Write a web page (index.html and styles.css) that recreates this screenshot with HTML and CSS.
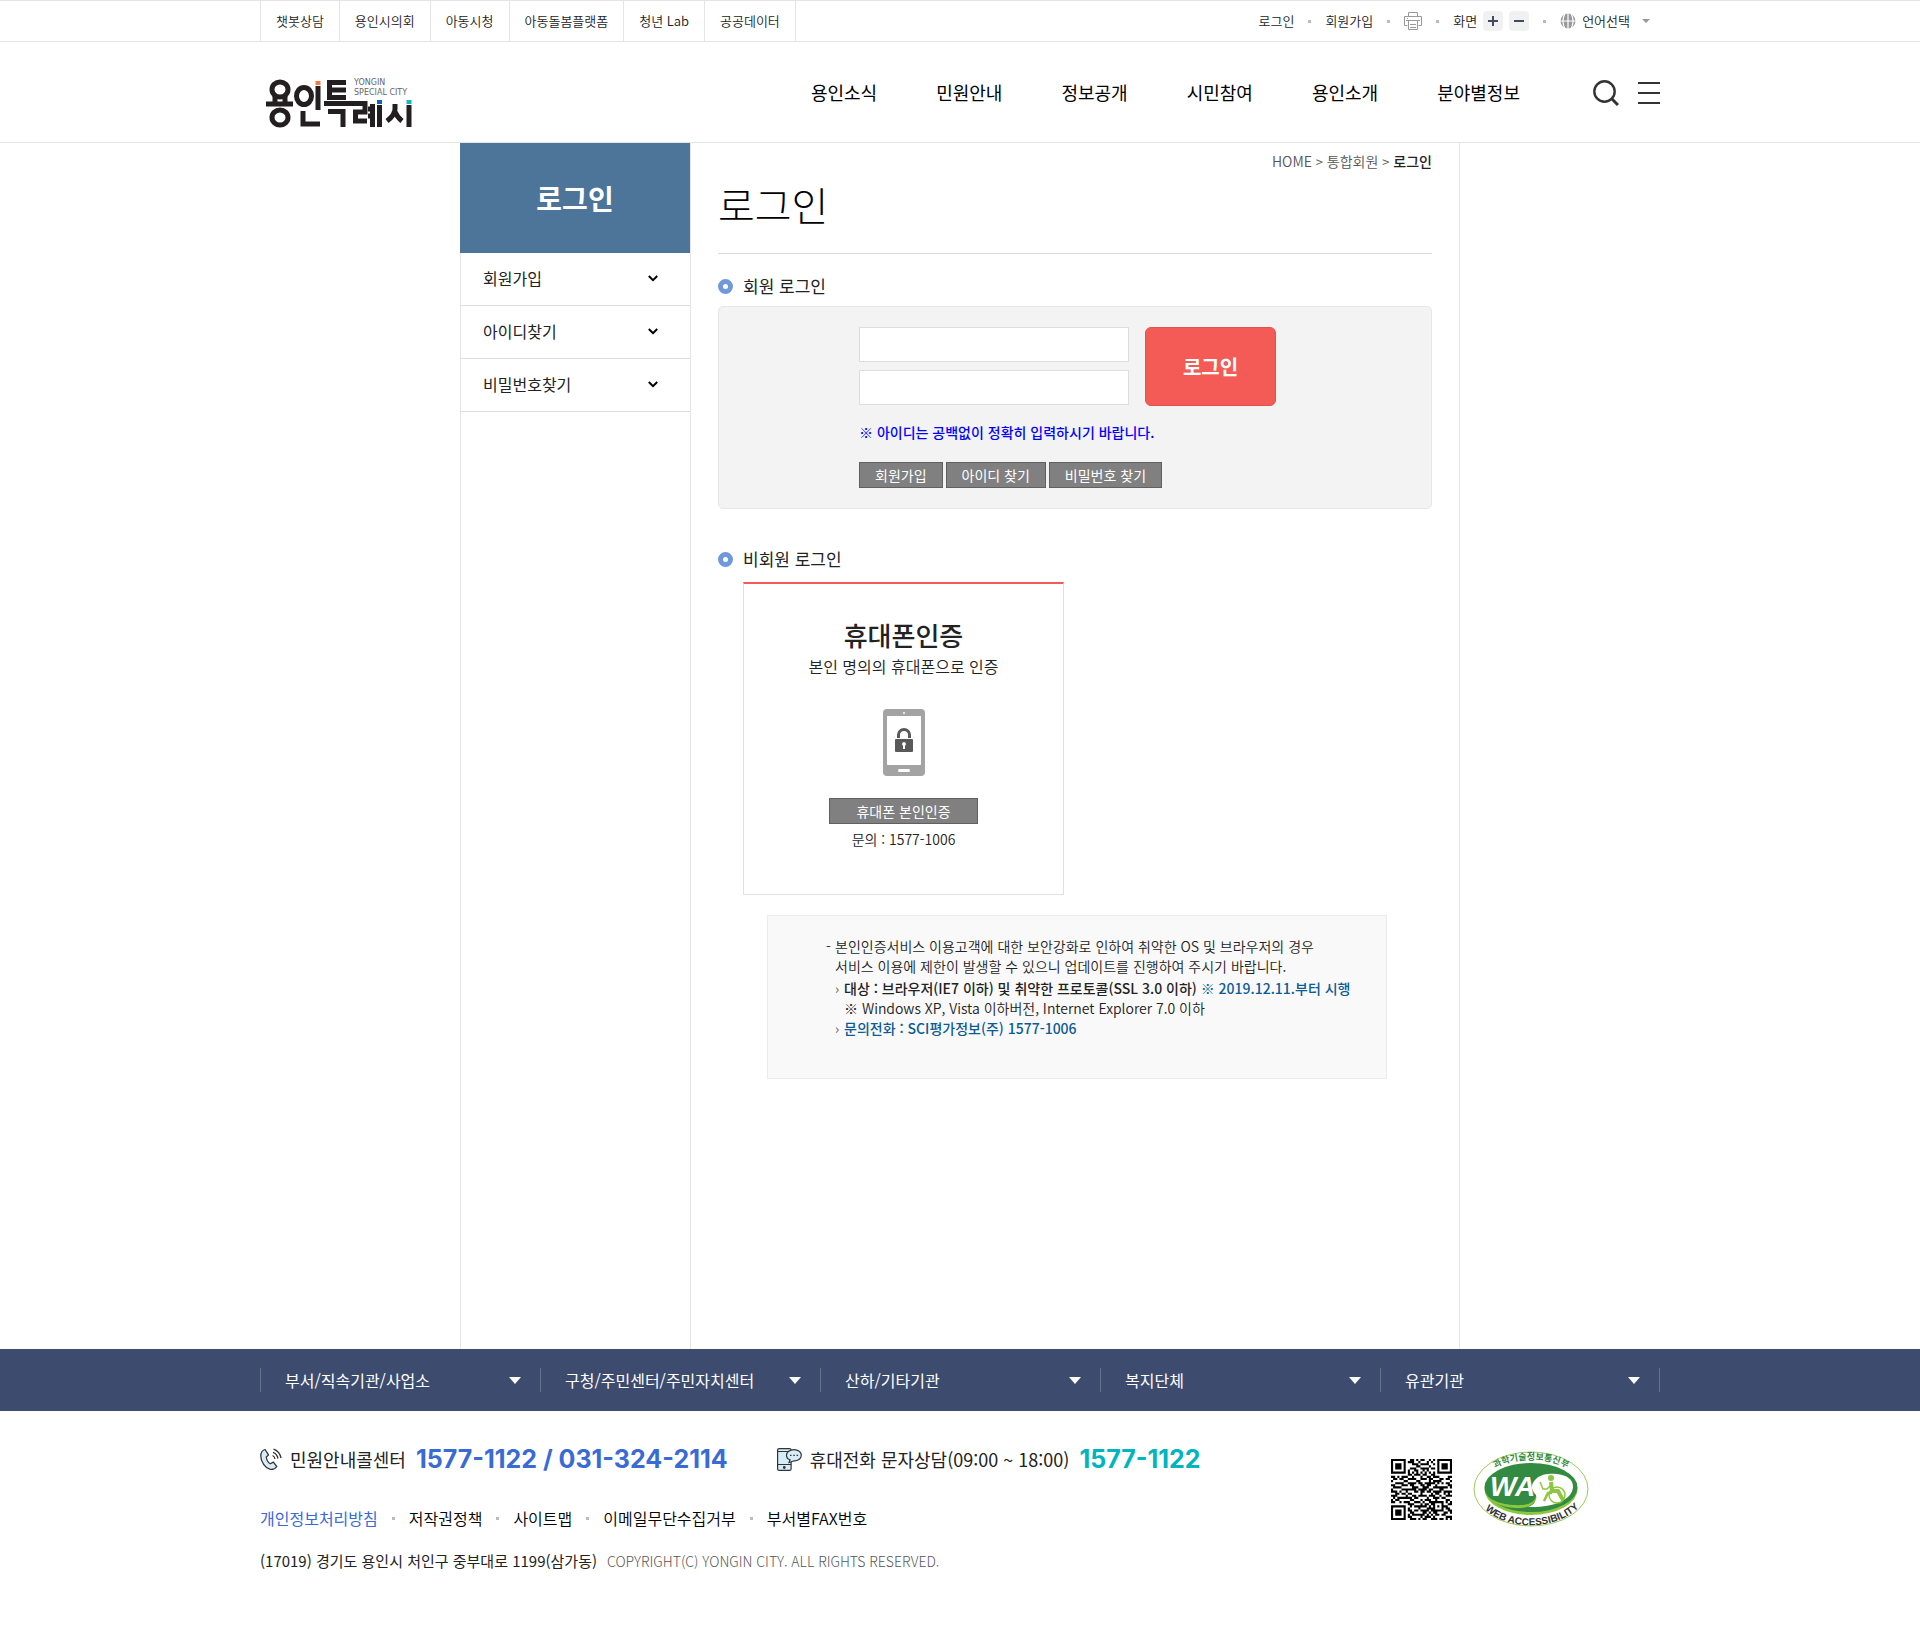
FILE: index.html
```html
<!DOCTYPE html>
<html lang="ko">
<head>
<meta charset="utf-8">
<meta name="viewport" content="width=device-width, initial-scale=1">
<title>로그인 - 용인특례시</title>
<link rel="stylesheet" href="styles.css">
</head>
<body>
<div class="topbar">
  <div class="wrap topbar-in">
    <ul class="site-links">
      <li><a href="#">챗봇상담</a></li>
      <li><a href="#">용인시의회</a></li>
      <li><a href="#">아동시청</a></li>
      <li><a href="#">아동돌봄플랫폼</a></li>
      <li><a href="#">청년 Lab</a></li>
      <li><a href="#">공공데이터</a></li>
    </ul>
    <div class="util">
      <a href="#">로그인</a>
      <i class="dot"></i>
      <a href="#">회원가입</a>
      <i class="dot"></i>
      <button class="plain" type="button" aria-label="인쇄">
        <svg width="18" height="18" viewBox="0 0 18 18" fill="none" stroke="#999"><path d="M4.500 4.500V.5h9v4M3.500 13.500h-3v-9h17v9h-3M2 8.500h14M4.500 8.500v9h9v-9M6 12.500h6M6 15.500h6M3 6.500h1"/></svg>
      </button>
      <i class="dot"></i>
      <div class="zoom">
        <span>화면</span>
        <button type="button" aria-label="확대"><svg width="10" height="10" viewBox="0 0 10 10"><path d="M0 4h4V0h2v4h4v2H6v4H4V6H0z" fill="#444a63"/></svg></button>
        <button type="button" aria-label="축소"><svg width="10" height="10" viewBox="0 0 10 10"><path d="M0 4h10v2H0z" fill="#444a63"/></svg></button>
      </div>
      <i class="dot"></i>
      <button class="plain lang" type="button">
        <svg width="16" height="16" viewBox="0 0 16 16"><circle cx="8" cy="8" r="7.500" fill="#999"/><path d="M8 0v16M0 8h16M5 .5C2.500 5 2.500 11 5 15.500M11 .5c2.500 4.500 2.500 10.500 0 15" fill="none" stroke="#fff" stroke-width="1.200"/></svg>
        언어선택
        <svg class="caret" width="8" height="4" viewBox="0 0 8 4"><path d="M0 0h8L4 4z" fill="#999"/></svg>
      </button>
    </div>
  </div>
</div>

<header class="header">
  <div class="wrap header-in">
    <a class="logo" href="#" aria-label="용인특례시">
      <svg width="156" height="58" viewBox="0 0 156 58">
        <g fill="none" stroke="#231f20" stroke-width="5">
          <ellipse cx="20" cy="12.500" rx="8" ry="7.500"/><path d="M6 27h27M15 19v7M25 19v7"/><ellipse cx="20" cy="40.500" rx="8" ry="7.500"/>
          <ellipse cx="44" cy="19" rx="7.500" ry="8.500"/><path d="M58 9v24M43 34v13h17"/>
          <path d="M86 5.500H69.500v15H86M70 13h16M64 26.500h31M68 34.500h15V50"/>
          <path d="M93 26.500h12v8.500H95.500v9H107M108 32h5M108 39h5M112.500 27v23M119.500 28v22"/>
          <path d="M135 27v5q0 6-8 12M134 33q3 7 8 11M149 28v22"/>
        </g>
        <path d="M55.500 4h5v4h-5z" fill="#f47b3c"/><path d="M117 23h5v4h-5z" fill="#0b63b5"/><path d="M146.500 23h5v4h-5z" fill="#12b9bd"/>
        <text class="logo-sub" x="94" y="8">YONGIN</text>
        <text class="logo-sub" x="94" y="18">SPECIAL CITY</text>
      </svg>
    </a>
    <nav class="gnb">
      <a href="#">용인소식</a><a href="#">민원안내</a><a href="#">정보공개</a><a href="#">시민참여</a><a href="#">용인소개</a><a href="#">분야별정보</a>
    </nav>
    <div class="tools">
      <button class="plain" type="button" aria-label="검색"><svg width="26" height="26" viewBox="0 0 26 26" fill="none" stroke="#333"><circle cx="11.500" cy="11.500" r="10.200" stroke-width="2.400"/><path d="M18.500 18.500l6.500 6.500" stroke-width="3"/></svg></button>
      <button class="plain" type="button" aria-label="전체메뉴"><svg width="22" height="22" viewBox="0 0 22 22"><path d="M0 0h22v2H0zM0 10h22v2H0zM0 20h22v2H0z" fill="#333"/></svg></button>
    </div>
  </div>
</header>

<div class="page">
  <aside class="side">
    <h2>로그인</h2>
    <ul>
      <li><a href="#">회원가입<svg width="10" height="7" viewBox="0 0 10 7"><path d="M.8 1L5 5.200 9.200 1" fill="none" stroke="#000" stroke-width="2"/></svg></a></li>
      <li><a href="#">아이디찾기<svg width="10" height="7" viewBox="0 0 10 7"><path d="M.8 1L5 5.200 9.200 1" fill="none" stroke="#000" stroke-width="2"/></svg></a></li>
      <li><a href="#">비밀번호찾기<svg width="10" height="7" viewBox="0 0 10 7"><path d="M.8 1L5 5.200 9.200 1" fill="none" stroke="#000" stroke-width="2"/></svg></a></li>
    </ul>
  </aside>
  <main class="content">
    <p class="crumb">HOME <span>&gt;</span> 통합회원 <span>&gt;</span> <strong>로그인</strong></p>
    <h1>로그인</h1>
    <h3 class="sec">회원 로그인</h3>
    <form class="login">
      <div class="fields">
        <div class="inputs">
          <input type="text" aria-label="아이디">
          <input type="password" aria-label="비밀번호">
        </div>
        <button class="submit" type="button">로그인</button>
      </div>
      <p class="warn">※ 아이디는 공백없이 정확히 입력하시기 바랍니다.</p>
      <div class="btns"><a class="btn" href="#">회원가입</a><a class="btn" href="#">아이디 찾기</a><a class="btn" href="#">비밀번호 찾기</a></div>
    </form>
    <h3 class="sec guest">비회원 로그인</h3>
    <section class="card">
      <h4>휴대폰인증</h4>
      <p class="desc">본인 명의의 휴대폰으로 인증</p>
      <svg width="42" height="67" viewBox="0 0 42 67"><rect width="42" height="67" rx="4" fill="#a3a3a3"/><path d="M4 7h34v49H4z" fill="#fff"/><circle cx="21" cy="4" r="1" fill="#fff"/><rect x="15" y="60" width="12" height="3" rx="1.500" fill="#fff"/><path d="M15.500 29v-3a5.500 5.500 0 0 1 11 0v3" fill="none" stroke="#595959" stroke-width="3"/><rect x="12" y="30" width="18" height="13" rx="1" fill="#595959"/><path d="M21 33a2 2 0 0 1 1 3.700V40h-2v-3.300A2 2 0 0 1 21 33z" fill="#fff"/></svg>
      <a class="btn wide" href="#">휴대폰 본인인증</a>
      <p class="ask">문의 : 1577-1006</p>
    </section>
    <section class="notice">
      <p class="dash">본인인증서비스 이용고객에 대한 보안강화로 인하여 취약한 OS 및 브라우저의 경우<br>서비스 이용에 제한이 발생할 수 있으니 업데이트를 진행하여 주시기 바랍니다.</p>
      <ul>
        <li><strong>대상 : 브라우저(IE7 이하) 및 취약한 프로토콜(SSL 3.0 이하) <em>※ 2019.12.11.부터 시행</em></strong><br>※ Windows XP, Vista 이하버전, Internet Explorer 7.0 이하</li>
        <li><strong><em>문의전화 : SCI평가정보(주) 1577-1006</em></strong></li>
      </ul>
    </section>
  </main>
</div>

<div class="orgs">
  <div class="wrap orgs-in">
    <button type="button">부서/직속기관/사업소</button>
    <button type="button">구청/주민센터/주민자치센터</button>
    <button type="button">산하/기타기관</button>
    <button type="button">복지단체</button>
    <button type="button">유관기관</button>
  </div>
</div>

<footer class="wrap footer">
  <div class="info">
    <div class="calls">
      <p class="call">
        <svg width="22" height="22" viewBox="0 0 22 22" fill="#d6ecf8" stroke="#333" stroke-width="1.300"><path d="M5 1.500C2 2.500.8 5 .8 8c0 6 4.500 12 9 13.200 3 .7 5.500-.5 7-2.700l-3.500-4.300-3 1.600C8 14.500 6.500 11.500 6.300 9L8.500 7z"/><path fill="none" d="M12.500 7.500q2 .8 2.500 3.500M13 4.300q4 1.500 5 6.200M13.500 1.200q6 2 7.500 8.800"/></svg>
        <span>민원안내콜센터</span><b>1577-1122 / 031-324-2114</b>
      </p>
      <p class="call teal">
        <svg width="25" height="23" viewBox="0 0 25 23" fill="#d6ecf8" stroke="#333" stroke-width="1.200"><rect x=".6" y=".6" width="13.500" height="21.800" rx="1.500"/><path d="M.6 3.500h13.500M.6 16.500h13.500"/><path d="M17 1.600c4.200 0 7.300 2.500 7.300 5.600s-3 5.600-7 5.600l-5.300 1.700 1-2.600C10.800 11 9.500 9.200 9.500 7.200c0-3.100 3.300-5.600 7.500-5.600z"/><circle cx="7.300" cy="19.500" r=".8" fill="#333"/><path d="M13 7.300h1.500M16.300 7.300h1.500M19.600 7.300h1.500"/></svg>
        <span>휴대전화 문자상담(09:00 ~ 18:00)</span><b>1577-1122</b>
      </p>
    </div>
    <ul class="policy">
      <li><a class="on" href="#">개인정보처리방침</a></li>
      <li><a href="#">저작권정책</a></li>
      <li><a href="#">사이트맵</a></li>
      <li><a href="#">이메일무단수집거부</a></li>
      <li><a href="#">부서별FAX번호</a></li>
    </ul>
    <address>(17019) 경기도 용인시 처인구 중부대로 1199(삼가동)<small>COPYRIGHT(C) YONGIN CITY. ALL RIGHTS RESERVED.</small></address>
  </div>
  <div class="marks">
    <svg class="qr" width="61" height="61" viewBox="0 0 29 29" role="img" aria-label="QR 코드"><path id="qr" fill="#000"/></svg>
    <svg width="116" height="76" viewBox="0 0 116 76" role="img" aria-label="웹 접근성 인증마크">
      <ellipse cx="58" cy="38" rx="57" ry="37" fill="#fff" stroke="#9cc95a"/>
      <ellipse cx="58" cy="38.500" rx="46.500" ry="25.500" fill="#8dc63f"/>
      <ellipse cx="58" cy="36.500" rx="46.500" ry="24.500" fill="#338a41"/>
      <path d="M64 27c8-7 37-6 36 9-1 14-22 21-45 20 7-2 8-7 8-12-6-6-5-12 1-17z" fill="#fff"/>
      <path d="M12 41c4 10 22 14 38 13 8-1 12-4 14-10-1 8-7 13-17 13-19 0-32-6-35-16z" fill="#8dc63f"/>
      <g fill="none" stroke="#8dc63f"><circle cx="84" cy="44" r="8" stroke-width="1.500"/><path d="M78 31l1 9h6l5 9" stroke-width="4"/><path d="M79 33l-5 5h-4l-3-7" stroke-width="1.500"/><path d="M79 42h-4l-4 8" stroke-width="2.500"/></g><circle cx="78" cy="27" r="3" fill="#8dc63f"/>
      <text class="wa" x="17" y="45">WA</text>
      <path id="arcTop" d="M16 23C30 4 86 4 100 23" fill="none"/>
      <path id="arcBottom" d="M9 55C30 81 86 81 109 53" fill="none"/>
      <text class="arc green"><textPath href="#arcTop" startOffset="50%">과학기술정보통신부</textPath></text>
      <text class="arc"><textPath href="#arcBottom" startOffset="50%">WEB ACCESSIBILITY</textPath></text>
    </svg>
  </div>
</footer>
<script src="script.js"></script>
</body>
</html>
```
FILE: script.js
```js
// QR modules, one string per row
const rows = [
  '11111110011010110010101111111',
  '10000010111001000101001000001',
  '10111010001110111100101011101',
  '10111010000011000010001011101',
  '10111010011100111101101011101',
  '10000010100110010100001000001',
  '11111110101010101010101111111',
  '00000000110111011001100000000',
  '11010111001000100110111000011',
  '01101100111100111011000110110',
  '10000011000011000010111100001',
  '00111100111101101111101010110',
  '11000111011000110110010000011',
  '01111000001110011100111111101',
  '10000111111101111011000110000',
  '11101001000110110110111101111',
  '00110110110000100001011001010',
  '11100001001101111011100100111',
  '01011111110110000100111011000',
  '10110000011000101110010000110',
  '11001011100111010011111110101',
  '00000000111000101101100010011',
  '11111110010111111010101011100',
  '10000010100001000111100010110',
  '10111010110110111101111110011',
  '10111010011000011010110001101',
  '10111010101111110101011011000',
  '10000010110000101110100000111',
  '11111110011101011001110110101'
];
document.getElementById('qr').setAttribute('d', rows.map((row, y) =>
  [...row].map((m, x) => m === '1' ? `M${x} ${y}h1v1h-1z` : '').join('')).join(''));
```
FILE: styles.css
```css
*, ::before, ::after { box-sizing: border-box; }
body, h1, h2, h3, h4, p, ul { margin: 0; padding: 0; }
body { background: #fff; color: #222; font: 350 14px/20px "Noto Sans CJK KR", sans-serif; }
ul { list-style: none; }
a { color: inherit; text-decoration: none; }
button, input { font: inherit; color: inherit; border-radius: 0; }
svg { display: block; flex: none; }
.plain { border: 0; padding: 0; background: none; }
.wrap { max-width: 1400px; margin: 0 auto; }

.topbar { border-top: 1px solid #e5e5e5; border-bottom: 1px solid #e5e5e5; font-size: 13px; }
.topbar-in { display: flex; justify-content: space-between; line-height: 40px; }
.site-links { display: flex; border-left: 1px solid #e5e5e5; }
.site-links a { display: block; padding: 0 15px; border-right: 1px solid #e5e5e5; }
.util { display: flex; align-items: center; gap: 14px; padding-right: 10px; }
.dot { width: 3px; height: 3px; background: #bbb; flex: none; }
.zoom { display: flex; align-items: center; gap: 6px; }
.zoom button { display: flex; align-items: center; justify-content: center; width: 20px; height: 20px; padding: 0; border: 0; border-radius: 4px; background: #f1f1f1; }
.lang { display: flex; align-items: center; gap: 6px; }
.caret { margin-left: 6px; }

.header { border-bottom: 1px solid #e5e5e5; }
.header-in { display: flex; align-items: center; height: 100px; }
.logo { padding-top: 28px; }
.logo-sub { font: 8px "DejaVu Sans", sans-serif; fill: #666; }
.gnb { display: flex; gap: 59px; margin-left: auto; font-size: 18px; font-weight: 400; color: #000; }
.tools { display: flex; align-items: center; gap: 19px; margin-left: 73px; padding-top: 2px; }

.page { display: flex; max-width: 1000px; margin: 0 auto; border: solid #e5e5e5; border-width: 0 1px; }
.side { width: 230px; flex: none; border-right: 1px solid #e5e5e5; }
.side h2 { margin: 0 0 0 -1px; background: #4c7599; color: #fff; font-size: 28px; font-weight: 700; line-height: 110px; text-align: center; }
.side a { display: flex; align-items: center; justify-content: space-between; height: 53px; padding: 0 32px 2px 22px; border-bottom: 1px solid #ddd; font-size: 16px; font-weight: 400; }
.content { flex: 1; min-width: 0; padding: 8px 27px 270px; }
.crumb { color: #555; text-align: right; }
.crumb span { font-size: 13px; }
.crumb strong { color: #222; font-weight: 500; }
h1 { padding: 4px 0 21px; border-bottom: 1px solid #ddd; color: #000; font-size: 40px; font-weight: 300; line-height: 56px; }
.sec { display: flex; align-items: center; gap: 10px; padding-top: 19px; font-size: 17px; font-weight: 400; line-height: 26px; }
.sec::before { content: ""; width: 15px; height: 15px; border: 5px solid #7199d9; border-radius: 50%; }
.login { margin-top: 7px; padding: 20px 140px; border: 1px solid #e7e7e7; border-radius: 5px; background: #f3f3f3; }
.fields { display: flex; gap: 16px; }
.inputs { display: grid; gap: 8px; align-content: start; width: 270px; }
.inputs input { width: 100%; height: 35px; padding: 0 8px; border: 1px solid #ddd; background: #fff; }
.submit { width: 131px; height: 79px; border: 1px solid #e05350; border-radius: 6px; background: #f45b57; color: #fff; font-size: 20px; font-weight: 700; }
.warn { margin: 16px 0 20px; color: #00f; font-weight: 500; }
.btns { display: flex; gap: 3px; }
.btn { padding: 0 15px; border: 1px solid #606060; background: #808080; color: #fff; font-weight: 400; line-height: 24px; }
.guest { padding-top: 37px; }
.card { display: flex; flex-direction: column; align-items: center; width: 321px; margin: 10px 0 0 25px; padding: 33px 0 45px; border: 1px solid #e0e0e0; border-top: 2px solid #f45b57; }
.card h4 { font-size: 26px; font-weight: 500; line-height: 36px; }
.desc { padding: 1px 0 31px; font-size: 16px; line-height: 24px; }
.wide { margin: 22px 0 5px; padding: 0 26px; }
.notice { margin: 20px 45px 0 49px; padding: 20px 0 40px 58px; border: 1px solid #ebebeb; background: #f9f9f9; white-space: nowrap; }
.dash { padding-left: 9px; }
.dash::before { content: "- "; float: left; margin-left: -9px; }
.notice ul { margin-top: 2px; }
.notice li { padding-left: 18px; }
.notice li::before { content: "›"; float: left; margin-left: -9px; color: #555; }
.notice strong { font-weight: 500; }
.notice em { font-style: normal; color: #0c5b94; }

.orgs { background: #3d4c6e; color: #fff; }
.orgs-in { display: grid; grid-template-columns: repeat(5, 1fr); padding: 19px 0; }
.orgs button { display: flex; align-items: center; justify-content: space-between; height: 24px; padding: 0 19px 0 24px; border: solid #65718c; border-width: 0 0 0 1px; background: none; font-size: 16px; font-weight: 400; white-space: nowrap; }
.orgs button:last-child { border-right-width: 1px; }
.orgs button::after { content: ""; border: solid transparent; border-top-color: #fff; border-width: 7px 6px 0; }

.footer { display: flex; justify-content: space-between; padding: 31px 71px 49px 0; }
.calls { display: flex; gap: 49px; line-height: 34px; }
.call { display: flex; align-items: center; gap: 8px; font-size: 18px; }
.call span { font-weight: 400; }
.call b { margin-left: 2px; font: 700 25px/34px Inter, sans-serif; color: #3a6ad4; }
.call.teal b { color: #00b5bd; }
.policy { display: flex; padding: 30px 0 19px; color: #000; font-size: 16px; line-height: 24px; }
.policy li { display: flex; align-items: center; }
.policy li + li::before { content: ""; width: 3px; height: 3px; margin: 0 14px; background: #bbb; }
.on { color: #3a6ad4; font-weight: 400; }
address { font-size: 15px; font-style: normal; font-weight: 400; line-height: 24px; }
address small { margin-left: 10px; color: #555; font-size: 14px; font-weight: 300; }
.marks { display: flex; align-items: center; align-self: flex-start; gap: 21px; padding-top: 9px; }
.wa { font: italic 700 28px "Liberation Sans", sans-serif; fill: #fff; }
.arc { font: 700 10px "Liberation Sans", "Noto Sans CJK KR", sans-serif; text-anchor: middle; fill: #333; }
.arc.green { font-size: 9px; fill: #338a41; }
```
